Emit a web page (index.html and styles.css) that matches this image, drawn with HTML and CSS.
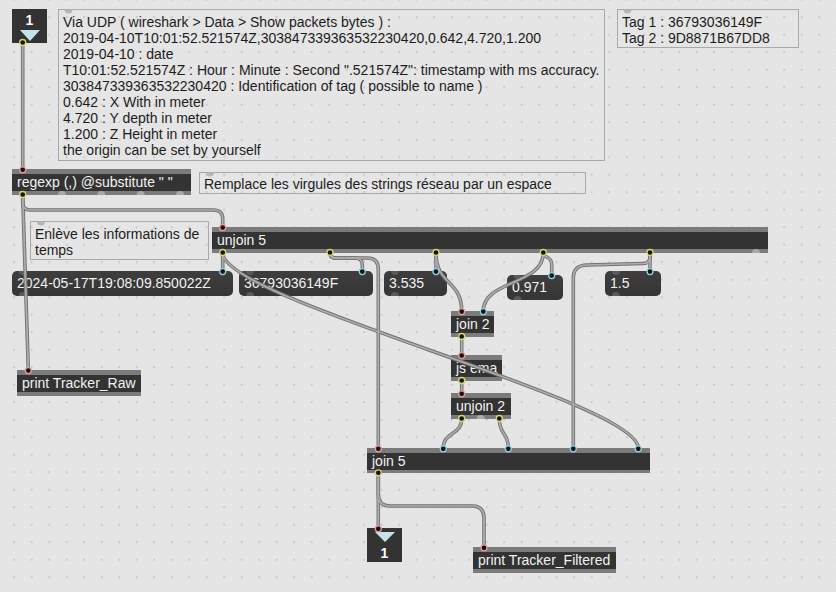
FILE: index.html
```html
<!DOCTYPE html>
<html>
<head>
<meta charset="utf-8">
<link rel="stylesheet" href="styles.css">
</head>
<body>
<div class="patcher">
  <div class="io io-in"><span class="io-num">1</span><span class="tri"></span></div>
  <div class="cmt c-info">Via UDP ( wireshark &gt; Data &gt; Show packets bytes ) :<br>2019-04-10T10:01:52.521574Z,303847339363532230420,0.642,4.720,1.200<br>2019-04-10 : date<br>T10:01:52.521574Z : Hour : Minute : Second ".521574Z": timestamp with ms accuracy.<br>303847339363532230420 : Identification of tag ( possible to name )<br>0.642 : X With in meter<br>4.720 : Y depth in meter<br>1.200 : Z Height in meter<br>the origin can be set by yourself</div>
  <div class="cmt c-tags">Tag 1 : 36793036149F<br>Tag 2 : 9D8871B67DD8</div>
  <div class="obj o-regexp">regexp (,) @substitute " "</div>
  <div class="cmt c-remplace">Remplace les virgules des strings réseau par un espace</div>
  <div class="cmt c-enleve">Enlève les informations de temps</div>
  <div class="obj o-unjoin5">unjoin 5</div>
  <div class="msg m1">2024-05-17T19:08:09.850022Z</div>
  <div class="msg m2">36793036149F</div>
  <div class="msg m3">3.535</div>
  <div class="msg m4">0.971</div>
  <div class="msg m5">1.5</div>
  <div class="obj o-join2">join 2</div>
  <div class="obj o-jsema">js ema</div>
  <div class="obj o-unjoin2">unjoin 2</div>
  <div class="obj o-join5">join 5</div>
  <div class="obj o-praw">print Tracker_Raw</div>
  <div class="obj o-pfilt">print Tracker_Filtered</div>
  <div class="io io-out"><span class="tri"></span><span class="io-num">1</span></div>

  <svg class="wires" width="836" height="592" viewBox="0 0 836 592">
    <defs>
      <path id="wa" d="M22.7,43 L22.7,169"/>
      <path id="wb" d="M22.7,195 L22.7,203 Q22.7,210 30,210 L213.5,210 Q222.7,210 222.7,219 L222.7,227"/>
      <path id="wc" d="M22.7,195 L28.3,370"/>
      <path id="wd" d="M222.7,253 L222.7,271"/>
      <path id="we" d="M222.7,253 C222.7,300 638.3,401 638.3,448"/>
      <path id="wf" d="M330,253 Q330,258 336,258 L355,258 Q362.3,258 362.3,265 L362.3,271"/>
      <path id="wg" d="M330,253 Q330,258 336,258 L367,258 Q378.3,258 378.3,269 L378.3,448"/>
      <path id="wh" d="M436,253 L436,271"/>
      <path id="wi" d="M436,253 C436,285 461.7,280 461.7,311"/>
      <path id="wj" d="M543.3,253 C543.3,258 551.7,256 551.7,264 L551.7,275"/>
      <path id="wk" d="M543.3,253 C543.3,285 483.3,280 483.3,311"/>
      <path id="wl" d="M650,253 L650,271"/>
      <path id="wm" d="M650,253 L650,257 Q650,263.5 643,263.5 L587,265 Q573.3,265.5 573.3,278 L573.3,448"/>
      <path id="wn" d="M461.7,337 L461.7,355"/>
      <path id="wo" d="M461.7,381 L461.7,393"/>
      <path id="wp" d="M461.7,419 C461.7,435 443.3,432 443.3,448"/>
      <path id="wq" d="M499.3,419 C499.3,435 508.3,432 508.3,448"/>
      <path id="wr" d="M378.3,473 L378.3,528"/>
      <path id="ws" d="M378.3,473 L378.3,494 Q378.3,506 390,506 L472,506 Q484,506 484,518 L484,547"/>
    </defs>
    <g class="bump-obj">
      <path d="M58,195 A4,4 0 0 1 66,195 Z"/>
      <path d="M97.3,195 A4,4 0 0 1 105.3,195 Z"/>
      <path d="M136.7,195 A4,4 0 0 1 144.7,195 Z"/>
      <path d="M176,195 A4,4 0 0 1 184,195 Z"/>
      <path d="M752,253 A4,4 0 0 1 760,253 Z"/>
      <path d="M476.7,419 A4,4 0 0 1 484.7,419 Z"/>
    </g>
    <g class="bump-msg">
      <path d="M18.7,296 A4,4 0 0 1 26.7,296 Z"/>
      <path d="M246,296 A4,4 0 0 1 254,296 Z"/>
      <path d="M391,296 A4,4 0 0 1 399,296 Z"/>
      <path d="M513.5,300 A4,4 0 0 1 521.5,300 Z"/>
      <path d="M612,296 A4,4 0 0 1 620,296 Z"/>
      <path d="M18.7,271 A4,4 0 0 0 26.7,271 Z"/>
      <path d="M246,271 A4,4 0 0 0 254,271 Z"/>
      <path d="M391,271 A4,4 0 0 0 399,271 Z"/>
      <path d="M513.5,275 A4,4 0 0 0 521.5,275 Z"/>
      <path d="M612,271 A4,4 0 0 0 620,271 Z"/>
    </g>
    <g class="bump-cmt">
      <path d="M64.5,9.5 A4,4 0 0 0 72.5,9.5 Z"/>
      <path d="M623.5,9.5 A4,4 0 0 0 631.5,9.5 Z"/>
      <path d="M206,172.5 A4,4 0 0 0 214,172.5 Z"/>
      <path d="M37,221.5 A4,4 0 0 0 45,221.5 Z"/>
    </g>
    <g class="w-out">
      <use href="#wa"/><use href="#wb"/><use href="#wc"/><use href="#wd"/><use href="#we"/>
      <use href="#wf"/><use href="#wg"/><use href="#wh"/><use href="#wi"/><use href="#wj"/>
      <use href="#wk"/><use href="#wl"/><use href="#wm"/><use href="#wn"/><use href="#wo"/>
      <use href="#wp"/><use href="#wq"/><use href="#wr"/><use href="#ws"/>
    </g>
    <g class="w-in">
      <use href="#wa"/><use href="#wb"/><use href="#wc"/><use href="#wd"/><use href="#we"/>
      <use href="#wf"/><use href="#wg"/><use href="#wh"/><use href="#wi"/><use href="#wj"/>
      <use href="#wk"/><use href="#wl"/><use href="#wm"/><use href="#wn"/><use href="#wo"/>
      <use href="#wp"/><use href="#wq"/><use href="#wr"/><use href="#ws"/>
    </g>
    <g class="ring r-out">
      <circle cx="22.7" cy="42.5" r="3"/>
      <circle cx="22.7" cy="194.5" r="3"/>
      <circle cx="222.7" cy="252.5" r="3"/>
      <circle cx="330" cy="252.5" r="3"/>
      <circle cx="436" cy="252.5" r="3"/>
      <circle cx="543.3" cy="252.5" r="3"/>
      <circle cx="650" cy="252.5" r="3"/>
      <circle cx="461.7" cy="336.5" r="3"/>
      <circle cx="461.7" cy="380.5" r="3"/>
      <circle cx="461.7" cy="418.5" r="3"/>
      <circle cx="499.3" cy="418.5" r="3"/>
      <circle cx="378.3" cy="472.8" r="3"/>
    </g>
    <g class="ring r-hot">
      <circle cx="22.7" cy="169.8" r="3"/>
      <circle cx="222.7" cy="227.6" r="3"/>
      <circle cx="461.7" cy="311.6" r="3"/>
      <circle cx="461.7" cy="355.6" r="3"/>
      <circle cx="461.7" cy="393.8" r="3"/>
      <circle cx="378.3" cy="448.8" r="3"/>
      <circle cx="28.3" cy="370.6" r="3"/>
      <circle cx="484" cy="547.8" r="3"/>
      <circle cx="378.3" cy="528.8" r="3"/>
    </g>
    <g class="ring r-cold">
      <circle cx="222.7" cy="271.6" r="3"/>
      <circle cx="362.3" cy="271.6" r="3"/>
      <circle cx="436" cy="271.6" r="3"/>
      <circle cx="551.7" cy="275.6" r="3"/>
      <circle cx="650" cy="271.6" r="3"/>
      <circle cx="483.3" cy="311.6" r="3"/>
      <circle cx="443.3" cy="448.8" r="3"/>
      <circle cx="508.3" cy="448.8" r="3"/>
      <circle cx="573.3" cy="448.8" r="3"/>
      <circle cx="638.3" cy="448.8" r="3"/>
    </g>
  </svg>
</div>
</body>
</html>
```

FILE: styles.css
```css
html, body {
  margin: 0;
  padding: 0;
  background: #e5e5e5;
}

.patcher {
  position: relative;
  width: 836px;
  height: 592px;
  overflow: hidden;
  background-color: #e5e5e5;
  background-image: radial-gradient(circle at center, #c3c3c3 0px, #c3c3c3 0.6px, rgba(229,229,229,0) 1.1px);
  background-size: 17.5px 17.5px;
  background-position: 5.45px 8.45px;
  font-family: "Liberation Sans", Arial, sans-serif;
  font-size: 14px;
}

/* ---------- object boxes ---------- */
.obj {
  position: absolute;
  box-sizing: border-box;
  height: 26px;
  padding: 0 5px;
  background: #333333;
  border-top: 5px solid #7b7b7b;
  border-bottom: 4px solid #7b7b7b;
  color: #f2f2f2;
  line-height: 17px;
  white-space: nowrap;
}
.o-regexp  { left: 12px;  top: 169px; width: 179px; }
.o-unjoin5 { left: 212px; top: 227px; width: 556px; }
.o-join2   { left: 451px; top: 311px; width: 43px; }
.o-jsema   { left: 451px; top: 355px; width: 51px; }
.o-unjoin2 { left: 451px; top: 393px; width: 60px; }
.o-join5   { left: 367px; top: 448px; width: 283px; height: 25px; border-bottom-width: 3px; }
.o-praw    { left: 17px;  top: 370px; width: 124px; }
.o-pfilt   { left: 473px; top: 547px; width: 143px; }

/* ---------- message boxes ---------- */
.msg {
  position: absolute;
  box-sizing: border-box;
  height: 25px;
  padding: 0 5px;
  border-radius: 5px;
  background: linear-gradient(#3e3e3e, #353535);
  color: #f2f2f2;
  line-height: 25px;
  white-space: nowrap;
}
.m1 { left: 12px;  top: 271px; width: 221px; }
.m2 { left: 239px; top: 271px; width: 134px; }
.m3 { left: 384px; top: 271px; width: 63px; }
.m4 { left: 507px; top: 275px; width: 56px; }
.m5 { left: 605px; top: 271px; width: 56px; }

/* ---------- comments ---------- */
.cmt {
  position: absolute;
  box-sizing: border-box;
  border: 1px solid #a8a8a8;
  padding: 4px 4px 2px 4px;
  color: #1c1c1c;
  line-height: 16px;
}
.c-info     { left: 58px;  top: 9px;   width: 547px; height: 152px; white-space: nowrap; }
.c-tags     { left: 617px; top: 9px;   width: 182px; height: 39px;  white-space: nowrap; }
.c-remplace { left: 199px; top: 172px; width: 387px; height: 22px; padding-top: 3px; white-space: nowrap; }
.c-enleve   { left: 30px;  top: 221px; width: 179px; height: 39px; }

/* ---------- inlet / outlet boxes ---------- */
.io {
  position: absolute;
  box-sizing: border-box;
  width: 35px;
  height: 34px;
  background: #333333;
  display: flex;
  flex-direction: column;
  align-items: center;
  color: #ffffff;
  font-weight: bold;
  line-height: 16px;
}
.io-in  { left: 12px;  top: 9px;   padding-top: 3px; }
.io-out { left: 367px; top: 528px; padding-top: 4px; }
.io-num { display: block; }
.tri {
  display: block;
  width: 0;
  height: 0;
  border-left: 10px solid transparent;
  border-right: 10px solid transparent;
  border-top: 11px solid #c3e2e9;
  margin-left: 1px;
}
.io-in .tri  { margin-top: 2px; }
.io-out .tri { border-top-width: 10px; margin-bottom: 3px; }

/* ---------- cords & ports ---------- */
.wires {
  position: absolute;
  left: 0;
  top: 0;
  pointer-events: none;
}
.w-out {
  fill: none;
  stroke: #727272;
  stroke-width: 3.6;
}
.w-in {
  fill: none;
  stroke: #adadad;
  stroke-width: 1.7;
}
.bump-obj { fill: #a9a9a9; }
.bump-msg { fill: #5a5a5a; }
.bump-cmt { fill: #b6b6b6; }
.ring {
  fill: #141414;
  stroke-width: 1.3;
}
.r-out  { stroke: #d9d870; }
.r-hot  { stroke: #e99c9c; }
.r-cold { stroke: #8fd2e2; }
```
